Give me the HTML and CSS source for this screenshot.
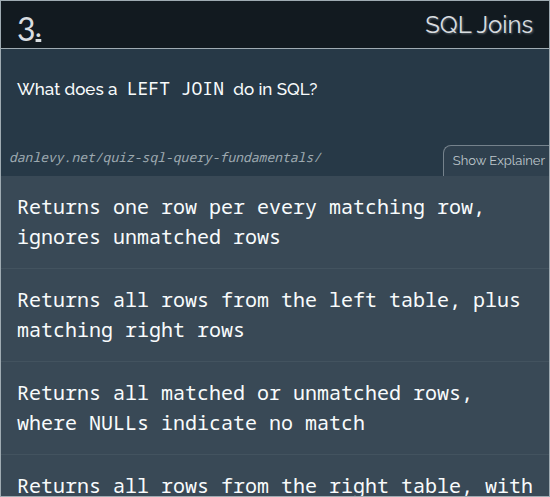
FILE: index.html
```html
<!DOCTYPE html>
<html lang="en">
<head>
<meta charset="utf-8">
<title>SQL Joins</title>
<link rel="stylesheet" href="styles.css">
</head>
<body>
<main class="quiz">
  <header class="quiz-header">
    <a class="number" href="#question">3<span class="dot">.</span></a>
    <h1 class="title">SQL Joins</h1>
  </header>
  <section class="prompt" id="question">
    <p class="question">What does a <code>LEFT JOIN</code> do in SQL?</p>
    <div class="prompt-footer">
      <cite class="source">danlevy.net/quiz-sql-query-fundamentals/</cite>
      <button class="explain" type="button">Show Explainer</button>
    </div>
  </section>
  <ul class="options">
    <li><button class="option" type="button">Returns one row per every matching row, ignores unmatched rows</button></li>
    <li><button class="option" type="button">Returns all rows from the left table, plus matching right rows</button></li>
    <li><button class="option" type="button">Returns all matched or unmatched rows, where NULLs indicate no match</button></li>
    <li><button class="option" type="button">Returns all rows from the right table, with matching left rows</button></li>
  </ul>
</main>
</body>
</html>
```
FILE: styles.css
```css
:root {
  --sans: Raleway, Lato, sans-serif;
  --mono: "Noto Sans Mono", "Noto Mono", "Liberation Mono", monospace;
  --line: #9fabb2;
}

* {
  box-sizing: border-box;
}

body {
  margin: 0;
  background: #394956;
  color: #f8fbfc;
  font-family: var(--sans);
}

.quiz {
  display: flex;
  flex-direction: column;
  height: 100vh;
  overflow: hidden;
  border: 1px solid var(--line);
}

.quiz-header {
  display: flex;
  flex-shrink: 0;
  align-items: center;
  justify-content: space-between;
  height: 48px;
  padding: 0 16px;
  border-bottom: 1px solid var(--line);
  background: #121a20;
  color: #d9dde0;
}

.number {
  padding-top: 8px;
  color: inherit;
  font-family: Lato, sans-serif;
  font-size: 32px;
  line-height: 32px;
  text-decoration: none;
}

.dot {
  font-weight: 700;
  font-size: 24px;
  vertical-align: 4px;
  text-decoration: underline 3px;
  text-underline-offset: 2px;
}

.title {
  margin: 0;
  font-size: 24px;
  font-weight: 400;
  line-height: 32px;
  text-shadow: 1px 1px 2px #59636a;
}

.prompt {
  display: flex;
  flex-direction: column;
  flex-shrink: 0;
  justify-content: space-between;
  min-height: 127px;
  background: #273947;
}

.question {
  margin: 0;
  padding: 24px 16px 0;
  font-size: 17px;
  font-weight: 500;
  line-height: 30px;
}

.question code {
  margin: 0 5px;
  font-family: var(--mono);
  font-size: 18px;
  font-weight: 400;
}

.prompt-footer {
  display: flex;
  align-items: flex-end;
  justify-content: space-between;
}

.source {
  padding: 0 8px 9px;
  color: #9eaab1;
  font-family: var(--mono);
  font-size: 13px;
  line-height: 20px;
}

.explain {
  padding: 4px 4px 4px 9px;
  border: 1px solid #75828c;
  border-width: 1px 0 0 1px;
  border-radius: 8px 0 0 0;
  background: #2f404e;
  color: #bec6cb;
  font-family: var(--sans);
  font-size: 13px;
  line-height: 22px;
}

.options {
  margin: 0;
  padding: 0;
  list-style: none;
}

.option {
  display: block;
  width: 100%;
  padding: 16px;
  border: 0;
  border-bottom: 1px solid #43535f;
  background: #394956;
  color: inherit;
  font-family: var(--mono);
  font-size: 20px;
  line-height: 30px;
  text-align: left;
}
```
